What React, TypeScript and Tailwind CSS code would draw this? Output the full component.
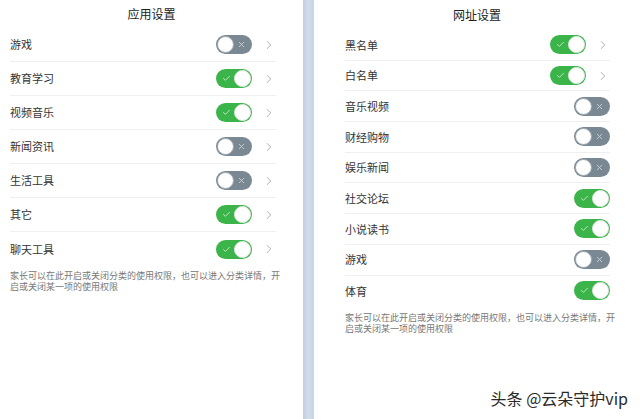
import { ChevronRight, Check, X } from 'lucide-react';

type Item = { name: string; on: boolean; arrow?: boolean };

const appItems: Item[] = [
  { name: '游戏', on: false, arrow: true },
  { name: '教育学习', on: true, arrow: true },
  { name: '视频音乐', on: true, arrow: true },
  { name: '新闻资讯', on: false, arrow: true },
  { name: '生活工具', on: false, arrow: true },
  { name: '其它', on: true, arrow: true },
  { name: '聊天工具', on: true, arrow: true },
];

const webItems: Item[] = [
  { name: '黑名单', on: true, arrow: true },
  { name: '白名单', on: true, arrow: true },
  { name: '音乐视频', on: false },
  { name: '财经购物', on: false },
  { name: '娱乐新闻', on: false },
  { name: '社交论坛', on: true },
  { name: '小说读书', on: true },
  { name: '游戏', on: false },
  { name: '体育', on: true },
];

const NOTE = '家长可以在此开启或关闭分类的使用权限，也可以进入分类详情，开启或关闭某一项的使用权限';

function Toggle({ on }: { on: boolean }) {
  if (on) {
    return (
      <div className="w-[36px] h-[19px] rounded-full bg-[#3bb54a] flex items-center justify-between pl-[6px] pr-[1px]">
        <Check className="w-[9px] h-[9px] text-[#bfe8c4]" strokeWidth={2.5} />
        <div className="w-[17px] h-[17px] rounded-full bg-white border border-[#e6e6e6]" />
      </div>
    );
  }
  return (
    <div className="w-[36px] h-[19px] rounded-full bg-[#7a8893] flex items-center justify-between pl-[1px] pr-[6px]">
      <div className="w-[17px] h-[17px] rounded-full bg-white border border-[#9aa5ad]" />
      <X className="w-[9px] h-[9px] text-[#c9d0d5]" strokeWidth={2.5} />
    </div>
  );
}

function Row({ item, h, last }: { item: Item; h: string; last: boolean }) {
  return (
    <div className={`${h} flex items-center ${last ? '' : 'border-b border-[#efefef]'}`}>
      <span className="flex-1 text-[11px] text-[#333]">{item.name}</span>
      <Toggle on={item.on} />
      {item.arrow ? (
        <div className="w-[24px] flex justify-end">
          <ChevronRight className="w-[14px] h-[14px] text-[#a3a3a3]" strokeWidth={1.5} />
        </div>
      ) : null}
    </div>
  );
}

export default function App() {
  return (
    <div
      className="relative w-[640px] h-[419px] flex bg-white overflow-hidden"
      style={{ fontFamily: '"Noto Sans CJK SC", "Noto Sans", sans-serif' }}
    >
      {/* app settings */}
      <div className="w-[303px] bg-white">
        <div className="h-[28px] flex items-center justify-center text-[12px] text-[#222]">应用设置</div>
        <div className="ml-[10px] w-[266px]">
          {appItems.map((it, i) => (
            <Row key={it.name} item={it} h="h-[34px]" last={i === appItems.length - 1} />
          ))}
          <p className="mt-[4px] w-[272px] text-[9px] leading-[11px] text-[#777]">{NOTE}</p>
        </div>
      </div>

      {/* divider strip */}
      <div className="w-[11px] bg-gradient-to-r from-[#c3cfde] via-[#d2dceb] to-[#c9d5e4]" />

      {/* web settings */}
      <div className="flex-1 bg-white">
        <div className="h-[30px] flex items-center justify-center text-[12px] text-[#222]">网址设置</div>
        <div className="ml-[31px] w-[265px]">
          {webItems.map((it, i) => (
            <Row key={it.name + i} item={it} h="h-[30.7px]" last={i === webItems.length - 1} />
          ))}
          <p className="mt-[6px] w-[272px] text-[9px] leading-[11px] text-[#777]">{NOTE}</p>
        </div>
      </div>

      {/* watermark */}
      <div
        className="absolute right-[12px] bottom-[9px] text-[16px] text-[#2a2a2a]"
        style={{ textShadow: '0 0 2px #fff, 0 0 2px #fff' }}
      >
        头条 @云朵守护vip
      </div>
    </div>
  );
}
